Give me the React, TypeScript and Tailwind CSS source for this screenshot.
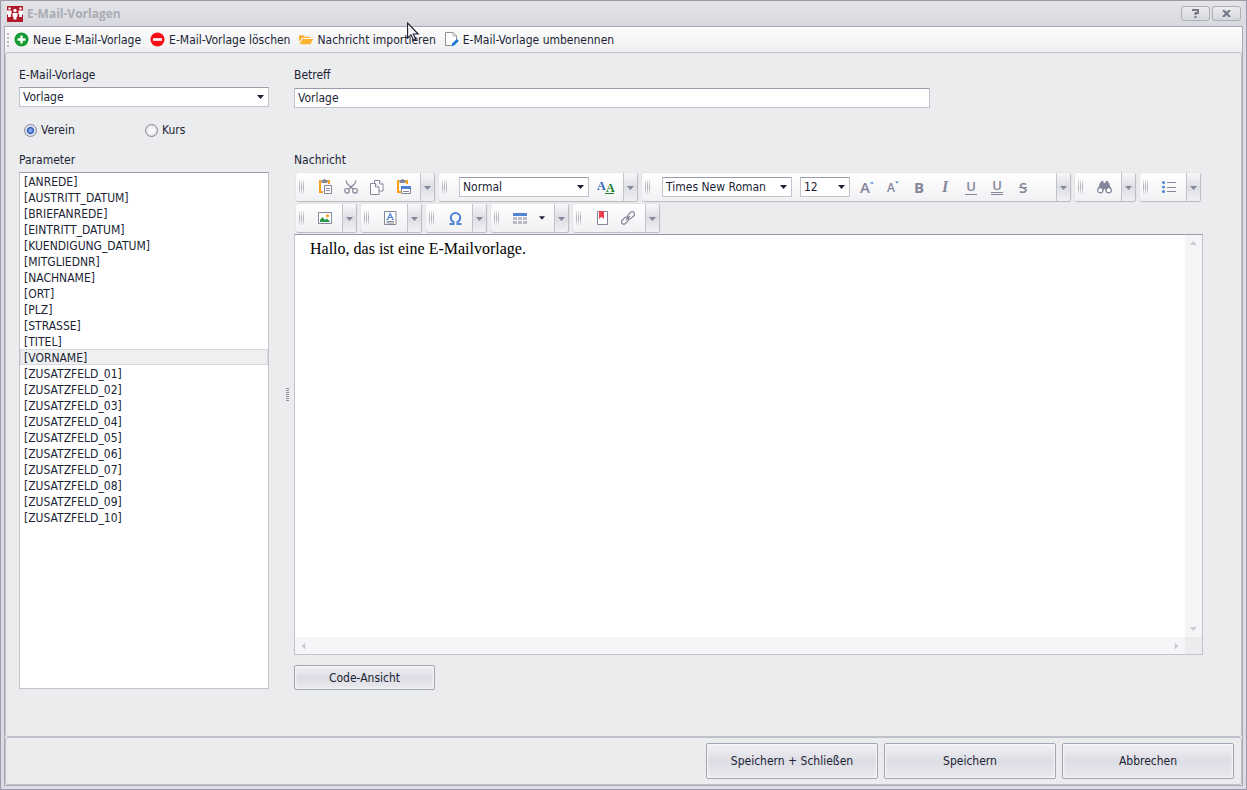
import React, { useState } from 'react';

const parameters = [
  '[ANREDE]',
  '[AUSTRITT_DATUM]',
  '[BRIEFANREDE]',
  '[EINTRITT_DATUM]',
  '[KUENDIGUNG_DATUM]',
  '[MITGLIEDNR]',
  '[NACHNAME]',
  '[ORT]',
  '[PLZ]',
  '[STRASSE]',
  '[TITEL]',
  '[VORNAME]',
  '[ZUSATZFELD_01]',
  '[ZUSATZFELD_02]',
  '[ZUSATZFELD_03]',
  '[ZUSATZFELD_04]',
  '[ZUSATZFELD_05]',
  '[ZUSATZFELD_06]',
  '[ZUSATZFELD_07]',
  '[ZUSATZFELD_08]',
  '[ZUSATZFELD_09]',
  '[ZUSATZFELD_10]'
];

const fieldBorder = 'border border-[#c3c3cd] border-t-[#9a9aa9]';

const pushButton =
  'rounded-[2px] border border-[#a3a5b1] bg-linear-to-b from-[#f1f1f4] via-[#dddde5] to-[#e9eaec] shadow-[inset_0_0_2px_1px_#f8f8fa]';

const Arrow = ({ className }: { className: string }) => (
  <svg width="7" height="4" viewBox="0 0 7 4" className={className} fill="currentColor">
    <path d="M0 0h7L3.5 4z" />
  </svg>
);

type SelectProps = {
  id?: string;
  label?: string;
  options: string[];
  className: string;
};

const Select = ({ id, label, options, className }: SelectProps) => (
  <div className={`relative ${className}`}>
    <select
      id={id}
      aria-label={label}
      className={`block h-5 w-full appearance-none bg-white pl-[3px] pr-4 outline-none ${fieldBorder}`}
    >
      {options.map((option) => (
        <option key={option}>{option}</option>
      ))}
    </select>
    <Arrow className="pointer-events-none absolute right-[5px] top-2" />
  </div>
);

const Tool = ({ label, children }: { label: string; children: React.ReactNode }) => (
  <button type="button" aria-label={label} className="flex w-[26px] shrink-0 items-center justify-center text-[#85869a]">
    {children}
  </button>
);

type GroupProps = {
  name: string;
  className?: string;
  children: React.ReactNode;
};

const Group = ({ name, className = 'pl-2 pr-1', children }: GroupProps) => (
  <div
    role="group"
    aria-label={name}
    className="flex h-[29px] overflow-hidden rounded-[3px] border-b border-r border-[#bdbdc5] bg-linear-to-b from-white to-[#f1f1f4] shadow-[0_0_1px_#b9b9c2]"
  >
    <div className="my-[7px] ml-[3px] flex w-[5px] shrink-0 justify-between">
      <span className="w-px bg-linear-to-b from-[#e6e6ea] via-[#adadb6] to-[#e6e6ea]"></span>
      <span className="w-px bg-linear-to-b from-[#e6e6ea] via-[#adadb6] to-[#e6e6ea]"></span>
      <span className="w-px bg-linear-to-b from-[#e6e6ea] via-[#adadb6] to-[#e6e6ea]"></span>
    </div>
    <div className={`flex items-center ${className}`}>{children}</div>
    <button
      type="button"
      aria-label={`${name}: weitere Optionen`}
      className="flex w-[14px] shrink-0 items-center justify-center border-l border-[#c3c3cb] bg-linear-to-b from-[#f8f8f9] via-[#dddee5] to-[#f1f1f3] text-[#85869a]"
    >
      <Arrow className="mt-[2px]" />
    </button>
  </div>
);

const AppIcon = () => (
  <svg width="16" height="16" viewBox="0 0 16 16">
    <path fill="#b01828" d="M0 0h16v16H0z" />
    <g fill="#fff">
      <circle cx="2.5" cy="2.5" r="1.200" />
      <circle cx="13.5" cy="2.5" r="1.200" />
      <circle cx="8" cy="4.500" r="1.700" />
      <path d="M0 4.500h4.500V8l-.7.500V11H1V8.500H0zM11.500 4.500H16v4h-1V11h-2.800V8.500l-.7-.5zM5.500 7h5v3.500l-1 .5v2.500h-3V11l-1-.5z" />
    </g>
  </svg>
);

const AddIcon = () => (
  <svg width="15" height="15" viewBox="0 0 15 15">
    <circle cx="7.500" cy="7.500" r="7" fill="#139a30" />
    <path d="M7.500 3.500v8M3.500 7.500h8" stroke="#fff" strokeWidth="2.400" />
  </svg>
);

const RemoveIcon = () => (
  <svg width="15" height="15" viewBox="0 0 15 15">
    <circle cx="7.500" cy="7.500" r="7" fill="#f80d12" />
    <path d="M3 7.500h9" stroke="#fff" strokeWidth="2.600" />
  </svg>
);

const FolderIcon = () => (
  <svg width="14" height="15" viewBox="0 0 15 15" fill="#fdb131">
    <path d="M0 11V3h5l1 1.500h6V6H3z" />
    <path d="M3.600 7H15l-2.600 5.500H1z" />
  </svg>
);

const RenameIcon = () => (
  <svg width="14" height="15" viewBox="0 0 14 15" fill="none">
    <path d="M6.500 13.500h-6V.5H8L11.500 4v4" fill="#fff" stroke="#8d8d92" />
    <path d="M8 .5V4h3.500" stroke="#b5b5ba" />
    <path d="M6.500 14.200l.6-2.600 4.800-4.600 2 2-4.800 4.600z" fill="#1f7ad6" />
  </svg>
);

const PasteIcon = () => (
  <svg width="15" height="16" viewBox="0 0 15 16" fill="none">
    <path d="M3.500 2H2v11h3M9 2h2v3" stroke="#f9a11c" strokeWidth="2" />
    <path d="M3.500 1h2V0h2v1h2v3h-6z" fill="#85869a" />
    <path d="M6.500 6.500h7v8h-7z" stroke="#85869a" fill="#fff" />
    <path d="M8 9.500h4M8 11.500h4" stroke="#85869a" />
  </svg>
);

const CutIcon = () => (
  <svg width="14" height="14" viewBox="0 0 14 14" fill="none" stroke="#85869a" strokeWidth="1.200">
    <circle cx="3" cy="10.800" r="2.300" />
    <circle cx="11" cy="10.800" r="2.300" />
    <path d="M2 .5l1 3 6.300 5.700M12 .5l-1 3-6.300 5.700" />
  </svg>
);

const CopyIcon = () => (
  <svg width="14" height="15" viewBox="0 0 14 15" fill="#fff" stroke="#85869a">
    <path d="M4.500.5h5l3.500 3.500v7H4.500z" />
    <path d="M9.500.5V4h3.500" />
    <path d="M.5 3.500h5L9 7v7.500H.5z" />
    <path d="M5.500 3.500V7H9" />
  </svg>
);

const PasteSpecialIcon = () => (
  <svg width="15" height="16" viewBox="0 0 15 16" fill="none">
    <path d="M3.500 2H2v11h3M9 2h2v3" stroke="#f9a11c" strokeWidth="2" />
    <path d="M3.500 1h2V0h2v1h2v3h-6z" fill="#85869a" />
    <path d="M5.500 7.500h9v7h-9z" stroke="#85869a" fill="#fff" />
    <path d="M5 7h10v3H5z" fill="#4f83d4" />
    <path d="M7 12.500h6" stroke="#85869a" />
  </svg>
);

const BinocularsIcon = () => (
  <svg width="15" height="13" viewBox="0 0 15 13">
    <path fill="#85869a" d="M3 1.500h1V0h2.500v2h2V0H11v1.500h1l2.500 8H8.300V8H6.700v1.500H.5z" />
    <circle cx="3.300" cy="9.300" r="2.600" fill="#fff" stroke="#85869a" strokeWidth="1.200" />
    <circle cx="11.700" cy="9.300" r="2.600" fill="#fff" stroke="#85869a" strokeWidth="1.200" />
  </svg>
);

const ListIcon = () => (
  <svg width="14" height="12" viewBox="0 0 14 12">
    <circle cx="1.500" cy="1.500" r="1.500" fill="#4f83d4" />
    <circle cx="1.500" cy="6" r="1.500" fill="#4f83d4" />
    <circle cx="1.500" cy="10.500" r="1.500" fill="#4f83d4" />
    <path d="M5 1.500h9M5 6.500h9M5 10.500h9" stroke="#85869a" />
  </svg>
);

const ImageIcon = () => (
  <svg width="14" height="12" viewBox="0 0 14 12">
    <path d="M.5.5h13v11H.5z" fill="#fff" stroke="#85869a" />
    <path d="M2 10V8l2.500-3L7 8l1.800-1.500L12 9.500v.5z" fill="#209a48" />
    <circle cx="9.500" cy="3.800" r="1.600" fill="#f9a11c" />
  </svg>
);

const TextBlockIcon = () => (
  <svg width="13" height="14" viewBox="0 0 13 14" fill="none">
    <path d="M.5.5h11.500v13H.5z" fill="#fff" stroke="#85869a" />
    <path d="M3.500 8.500L6.200 2.500 9 8.500M4.500 6.500h3.500M2.500 8.500h2M7.800 8.500h2" stroke="#4f83d4" strokeWidth="1.200" />
    <path d="M2.500 10.500h7.500M2.500 12h7.500" stroke="#85869a" />
  </svg>
);

const SymbolIcon = () => (
  <svg width="13" height="13" viewBox="0 0 13 13" fill="none" stroke="#4f83d4" strokeWidth="2">
    <path d="M.5 12h4V9.800C2.600 9 1.800 7.500 1.800 5.700 1.800 3 3.800 1 6.500 1s4.700 2 4.700 4.700c0 1.800-.8 3.300-2.700 4.100V12h4" />
  </svg>
);

const TableIcon = () => (
  <svg width="14" height="11" viewBox="0 0 14 11">
    <path d="M0 0h14v3H0z" fill="#4f83d4" />
    <path d="M0 4h4v3H0zM5 4h4v3H5zM10 4h4v3h-4zM0 8h4v3H0zM5 8h4v3H5zM10 8h4v3h-4z" fill="#b9bac6" />
  </svg>
);

const BookmarkIcon = () => (
  <svg width="11" height="14" viewBox="0 0 11 14">
    <path d="M.5.500h10v13H.5z" fill="#fff" stroke="#85869a" />
    <path d="M2 0h5v8L4.500 5.800 2 8z" fill="#ee3d4e" />
  </svg>
);

const LinkIcon = () => (
  <svg width="14" height="14" viewBox="0 0 14 14" fill="none" stroke="#85869a" strokeWidth="1.200">
    <rect x="6" y="2" width="8" height="4.600" rx="2.300" transform="rotate(-45 10 4.300)" />
    <rect x="0" y="7.400" width="8" height="4.600" rx="2.300" transform="rotate(-45 4 9.700)" />
    <path d="M5 9l4-4" />
  </svg>
);

const CursorIcon = () => (
  <svg width="13" height="20" viewBox="0 0 13 20" className="pointer-events-none absolute left-[406px] top-[21px]">
    <path d="M.6 1v15l3.500-3.200 2.400 5.500 2.200-1-2.400-5.300h4.900z" fill="#f8f8fa" stroke="#1c1b2b" strokeWidth="1.100" />
  </svg>
);

const actions = [
  { label: 'Neue E-Mail-Vorlage', icon: <AddIcon /> },
  { label: 'E-Mail-Vorlage löschen', icon: <RemoveIcon /> },
  { label: 'Nachricht importieren', icon: <FolderIcon /> },
  { label: 'E-Mail-Vorlage umbenennen', icon: <RenameIcon /> }
];

const App = () => {
  const [scope, setScope] = useState('Verein');
  const [active, setActive] = useState('[VORNAME]');
  const [subject, setSubject] = useState('Vorlage');
  const [message, setMessage] = useState('Hallo, das ist eine E-Mailvorlage.');

  return (
    <div className="relative flex min-h-screen flex-col border border-[#9b9bab] bg-[#dcdde2] px-[3px] pb-[3px] font-['DejaVu_Sans_Condensed','DejaVu_Sans',sans-serif] text-[12px] leading-4 text-[#201f35]">
      <header className="flex h-[25px] items-center bg-linear-to-b from-[#e5e5e9] to-[#d8d9de] pl-[3px] pr-[2px]">
        <AppIcon />
        <h1 className="ml-1 flex-1 font-['Open_Sans',sans-serif] text-[12px] font-bold text-[#a9acb5]">E-Mail-Vorlagen</h1>
        <div className="flex gap-[2px] text-[#777989]">
          <button type="button" aria-label="Hilfe" className="flex h-[15px] w-[29px] items-center justify-center rounded-[3px] border border-[#adafb8] bg-linear-to-b from-[#ececef] to-[#d6d7dc]">
            <svg width="7" height="9" viewBox="0 0 7 9" fill="none" stroke="currentColor" strokeWidth="2">
              <path d="M0 1h6v3H3.500v2M3.500 7v2" />
            </svg>
          </button>
          <button type="button" aria-label="Schließen" className="flex h-[15px] w-[29px] items-center justify-center rounded-[3px] border border-[#adafb8] bg-linear-to-b from-[#ececef] to-[#d6d7dc]">
            <svg width="9" height="7" viewBox="0 0 9 7" fill="none" stroke="currentColor" strokeWidth="2.200">
              <path d="M1 0l7 7M8 0L1 7" />
            </svg>
          </button>
        </div>
      </header>

      <div className="flex flex-1 flex-col border border-[#a9a9b6] bg-[#ebecee]">
        <nav className="flex h-[25px] items-center bg-linear-to-b from-[#fdfdfe] to-[#efeff1] pl-[2px]">
          <div className="mr-[5px] flex flex-col gap-[2px]">
            <span className="size-[2px] bg-[#b9bac2]"></span>
            <span className="size-[2px] bg-[#b9bac2]"></span>
            <span className="size-[2px] bg-[#b9bac2]"></span>
            <span className="size-[2px] bg-[#b9bac2]"></span>
          </div>
          <div className="flex gap-[9px]">
            {actions.map((action) => (
              <button key={action.label} type="button" className="flex items-center gap-1 whitespace-nowrap">
                {action.icon}
                {action.label}
              </button>
            ))}
          </div>
        </nav>

        <main className="flex flex-1 rounded-[3px] border border-[#c0c0ca] pb-[46px] pl-[13px] pr-[38px] pt-[14px]">
          <div className="flex w-[250px] shrink-0 flex-col pb-px">
            <label htmlFor="template">E-Mail-Vorlage</label>
            <Select id="template" options={['Vorlage']} className="mt-1" />

            <div className="mt-[15px] flex pl-[5px]">
              {['Verein', 'Kurs'].map((option) => (
                <label key={option} className="flex w-[121px] items-center gap-1">
                  <input
                    type="radio"
                    name="scope"
                    checked={scope === option}
                    onChange={() => setScope(option)}
                    className="size-[13px] appearance-none rounded-full border border-[#85869a] bg-white bg-radial from-[#fff] to-[#e3e3e8] shadow-[inset_0_0_0_1px_#dcdce2] checked:from-[#8fb2ef] checked:from-10% checked:via-[#2f5bb5] checked:via-40% checked:to-[#f1f3f9] checked:to-55%"
                  />
                  {option}
                </label>
              ))}
            </div>

            <span id="parameter-label" className="mt-[14px]">Parameter</span>
            <ul role="listbox" aria-labelledby="parameter-label" className={`mt-1 flex-1 bg-white ${fieldBorder}`}>
              {parameters.map((name) => (
                <li
                  key={name}
                  role="option"
                  aria-selected={name === active}
                  onClick={() => setActive(name)}
                  className={
                    name === active
                      ? 'flex h-4 items-start border border-[#d8d9dc] bg-[#eeeff1] pl-[3px]'
                      : 'flex h-4 items-start border border-transparent pl-[3px]'
                  }
                >
                  {name}
                </li>
              ))}
            </ul>
          </div>

          <div className="flex w-[25px] shrink-0 items-center justify-end pr-[5px] pt-8">
            <div className="flex flex-col gap-px">
              {[0, 1, 2, 3, 4, 5, 6].map((dot) => (
                <span key={dot} className="h-px w-[3px] bg-[#8f909c]"></span>
              ))}
            </div>
          </div>

          <div className="flex min-w-0 flex-1 flex-col">
            <label htmlFor="subject">Betreff</label>
            <input
              id="subject"
              type="text"
              value={subject}
              onChange={(e) => setSubject(e.target.value)}
              className={`mt-[5px] h-5 w-full max-w-[636px] bg-white px-[3px] outline-none ${fieldBorder}`}
            />

            <label htmlFor="message" className="mt-11">Nachricht</label>
            <div role="toolbar" aria-label="Formatierung" className="mb-px mt-[5px] flex flex-wrap gap-x-1 gap-y-[2px] pl-[2px]">
              <Group name="Zwischenablage">
                <Tool label="Einfügen"><PasteIcon /></Tool>
                <Tool label="Ausschneiden"><CutIcon /></Tool>
                <Tool label="Kopieren"><CopyIcon /></Tool>
                <Tool label="Inhalte einfügen"><PasteSpecialIcon /></Tool>
              </Group>
              <Group name="Format" className="pl-3 pr-1">
                <Select label="Absatzformat" options={['Normal']} className="mr-1 w-[130px]" />
                <Tool label="Formatvorlage">
                  <svg width="18" height="20" viewBox="0 0 18 20" className="font-['Liberation_Serif',serif] font-bold">
                    <text x="0" y="13" fontSize="12" fill="#3067b8">A</text>
                    <text x="9" y="15" fontSize="12" fill="#16822c">A</text>
                    <path d="M8 16.500h9" stroke="#16822c" />
                  </svg>
                </Tool>
              </Group>
              <Group name="Schrift" className="pl-3 pr-5">
                <Select label="Schriftart" options={['Times New Roman']} className="mr-2 w-[130px]" />
                <Select label="Schriftgröße" options={['12']} className="mr-1 w-[50px]" />
                <Tool label="Schrift vergrößern">
                  <span className="font-['Open_Sans',sans-serif] text-[15px] font-semibold">A</span>
                  <svg width="4" height="12" viewBox="0 0 4 12"><path d="M0 2.500L2 .5l2 2z" fill="#4f83d4" /></svg>
                </Tool>
                <Tool label="Schrift verkleinern">
                  <span className="pt-[2px] font-['Open_Sans',sans-serif] text-[12px] font-semibold">A</span>
                  <svg width="4" height="12" viewBox="0 0 4 12"><path d="M0 .5h4l-2 2z" fill="#4f83d4" /></svg>
                </Tool>
                <Tool label="Fett"><span className="font-['Open_Sans',sans-serif] text-[15px] font-bold">B</span></Tool>
                <Tool label="Kursiv"><span className="font-['Liberation_Serif',serif] text-[16px] font-bold italic">I</span></Tool>
                <Tool label="Unterstrichen">
                  <span className="h-[15px] border-b border-current px-px font-['Open_Sans',sans-serif] text-[13px] font-semibold leading-[13px]">U</span>
                </Tool>
                <Tool label="Doppelt unterstrichen">
                  <span className="h-4 border-b-3 border-double border-current px-px font-['Open_Sans',sans-serif] text-[13px] font-semibold leading-[13px]">U</span>
                </Tool>
                <Tool label="Durchgestrichen"><span className="font-['Open_Sans',sans-serif] text-[15px] font-semibold line-through">S</span></Tool>
              </Group>
              <Group name="Suchen">
                <Tool label="Suchen"><BinocularsIcon /></Tool>
              </Group>
              <Group name="Liste">
                <Tool label="Aufzählung"><ListIcon /></Tool>
              </Group>
              <Group name="Bild">
                <Tool label="Bild einfügen"><ImageIcon /></Tool>
              </Group>
              <Group name="Textfeld">
                <Tool label="Textfeld einfügen"><TextBlockIcon /></Tool>
              </Group>
              <Group name="Symbol">
                <Tool label="Symbol einfügen"><SymbolIcon /></Tool>
              </Group>
              <Group name="Tabelle">
                <Tool label="Tabelle einfügen"><TableIcon /></Tool>
                <button type="button" aria-label="Tabellenoptionen" className="flex w-[17px] items-center justify-center">
                  <Arrow className="w-[6px]" />
                </button>
              </Group>
              <Group name="Verweise">
                <Tool label="Textmarke"><BookmarkIcon /></Tool>
                <Tool label="Hyperlink"><LinkIcon /></Tool>
              </Group>
            </div>

            <div className={`flex flex-1 flex-col bg-white ${fieldBorder}`}>
              <div className="flex flex-1">
                <textarea
                  id="message"
                  value={message}
                  onChange={(e) => setMessage(e.target.value)}
                  className="block flex-1 resize-none px-[15px] pt-[5px] font-['Liberation_Serif',serif] text-[16px] leading-[18px] text-black outline-none"
                />
                <div className="flex w-[17px] flex-col items-center justify-between bg-[#f5f5f7] py-[6px] text-[#c9cad1]">
                  <Arrow className="rotate-180" />
                  <Arrow className="" />
                </div>
              </div>
              <div className="flex h-[17px] bg-[#f5f5f7] text-[#c9cad1]">
                <div className="flex flex-1 items-center justify-between px-[5px]">
                  <Arrow className="rotate-90" />
                  <Arrow className="-rotate-90" />
                </div>
                <div className="w-[17px] bg-[#ebecee]"></div>
              </div>
            </div>

            <button type="button" className={`mt-[10px] h-[25px] w-[141px] ${pushButton}`}>
              Code-Ansicht
            </button>
          </div>
        </main>

        <footer className="flex h-12 items-center justify-end gap-[6px] rounded-[3px] border border-[#c0c0ca] pr-[7px]">
          <button type="button" className={`h-9 w-[172px] ${pushButton}`}>Speichern + Schließen</button>
          <button type="button" className={`h-9 w-[172px] ${pushButton}`}>Speichern</button>
          <button type="button" className={`h-9 w-[172px] ${pushButton}`}>Abbrechen</button>
        </footer>
      </div>
      <CursorIcon />
    </div>
  );
};

export default App;
